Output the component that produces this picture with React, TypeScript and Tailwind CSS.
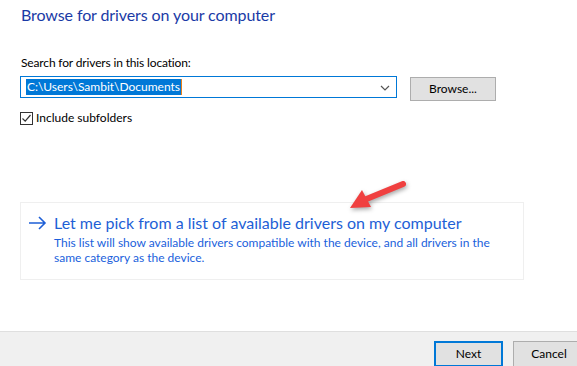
import React from "react";

export default function App() {
  const font = { fontFamily: '"Segoe UI", Lato, "Noto Sans", sans-serif' };
  return (
    <div className="relative w-[577px] h-[366px] bg-white overflow-hidden flex flex-col" style={font}>
      <div className="flex-1 pl-[20px] flex flex-col">
        <div className="mt-[4px] ml-[1px] h-[22px] text-[16px] tracking-[-0.1px] leading-[22px] text-[#1a3aa6] whitespace-nowrap">
          Browse for drivers on your computer
        </div>
        <div className="mt-[29px] ml-[1px] h-[16px] text-[12px] tracking-[-0.15px] leading-[16px] text-black whitespace-nowrap">
          Search for drivers in this location:
        </div>
        <div className="mt-[5px] flex items-start">
          <div className="w-[377px] h-[22px] border border-[#0078d7] flex items-center pl-[5px] pr-[6px]">
            <span className="bg-[#0078d7] text-white text-[12px] leading-[16px] px-[1px] whitespace-nowrap">
              C:\Users\Sambit\Documents
            </span>
            <span className="w-[1px] h-[16px] bg-[#e8801a]" />
            <div className="flex-1" />
            <svg width="10" height="6" viewBox="0 0 10 6" className="mt-[1px]">
              <path d="M1 1 L5 5 L9 1" stroke="#555" strokeWidth="1.2" fill="none" />
            </svg>
          </div>
          <button className="ml-[13px] mt-[1px] w-[86px] h-[24px] bg-[#e1e1e1] border border-[#adadad] text-[12px] text-black leading-[16px]">
            Browse...
          </button>
        </div>
        <div className="mt-[9px] flex items-center">
          <div className="w-[13px] h-[13px] border border-[#333] flex items-center justify-center">
            <svg width="11" height="11" viewBox="0 0 11 11">
              <path d="M1.5 5.5 L4.2 8.2 L9.5 2" stroke="#333" strokeWidth="1.2" fill="none" />
            </svg>
          </div>
          <span className="ml-[3px] text-[12px] leading-[16px] text-black whitespace-nowrap">Include subfolders</span>
        </div>
        <div className="mt-[76px] w-[504px] h-[78px] border border-[#efefef] flex flex-col pl-[7px] pt-[9px]">
          <div className="flex items-center h-[22px]">
            <svg width="19" height="14" viewBox="0 0 19 14">
              <path d="M1 7 H17 M11 1 L17 7 L11 13" stroke="#1e5fd6" strokeWidth="1.6" fill="none" />
            </svg>
            <span className="ml-[7px] text-[16px] leading-[22px] text-[#1e5fd6] whitespace-nowrap">
              Let me pick from a list of available drivers on my computer
            </span>
          </div>
          <div className="ml-[26px] mt-[1px] text-[12px] leading-[15px] text-[#1a5fdc] w-[445px]">
            This list will show available drivers compatible with the device, and all drivers in the same category as the device.
          </div>
        </div>
      </div>
      <div className="h-[35px] border-t border-[#dfdfdf] bg-[#f0f0f0] flex items-start justify-end pt-[9px]">
        <button className="w-[69px] h-[26px] border-2 border-[#0078d7] bg-[#e1e1e1] text-[12px] text-black leading-[16px]">
          Next
        </button>
        <button className="ml-[10px] w-[72px] h-[26px] border border-[#adadad] bg-[#e1e1e1] text-[12px] text-black leading-[16px] -mr-[8px]">
          Cancel
        </button>
      </div>
      <svg className="absolute left-[340px] top-[175px]" width="75" height="45" viewBox="0 0 75 45" style={{ filter: "drop-shadow(1px 2px 2px rgba(0,0,0,0.35))" }}>
        <path d="M63 9 L24 25" stroke="#f04040" strokeWidth="6" strokeLinecap="round" fill="none" />
        <path d="M10 33 L22 15 L31 32 Z" fill="#f04040" />
      </svg>
    </div>
  );
}
